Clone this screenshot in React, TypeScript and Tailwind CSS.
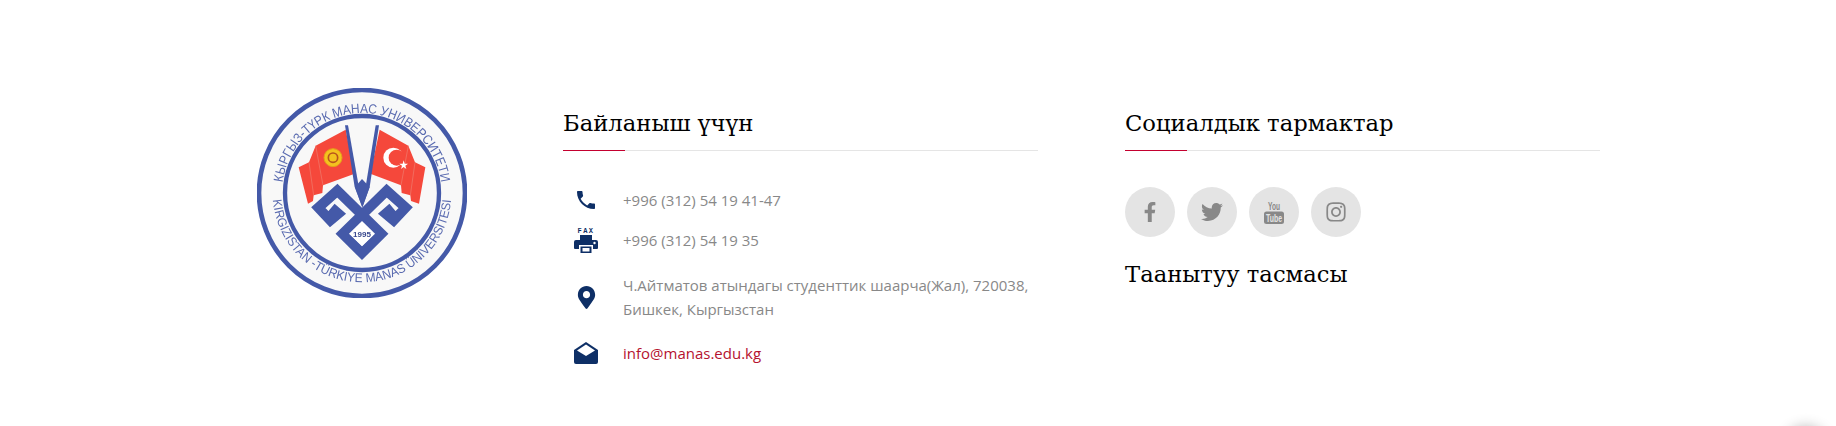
import React from "react";
import { FaFacebookF, FaInstagram, FaMapMarkerAlt, FaTwitter } from "react-icons/fa";
import { MdLocalPhone } from "react-icons/md";

const Logo: React.FC = () => {
  const blue = "#4459a8";
  const red = "#f5483b";
  return (
    <svg viewBox="52 53 630 630" className="w-[210px] h-[210px] blur-[0.5px]">
      <defs>
        <path id="logoTop" d="M 127 368 A 240 240 0 0 1 607 368" />
        <path id="logoBottom" d="M 99 368 A 268 268 0 0 0 635 368" />
      </defs>
      <circle cx="367" cy="368" r="309" fill="#f8f8f8" stroke={blue} strokeWidth="14" />
      <circle cx="367" cy="368" r="231" fill="#f8f8f8" stroke={blue} strokeWidth="13" />
      <text fill="#5a6bb0" fontSize="40" fontFamily="Liberation Sans, sans-serif">
        <textPath href="#logoTop" startOffset="50%" textAnchor="middle" textLength="690" lengthAdjust="spacingAndGlyphs">
          КЫРГЫЗ-ТҮРК МАНАС УНИВЕРСИТЕТИ
        </textPath>
      </text>
      <text fill="#5a6bb0" fontSize="38" fontFamily="Liberation Sans, sans-serif">
        <textPath href="#logoBottom" startOffset="50%" textAnchor="middle" textLength="800" lengthAdjust="spacingAndGlyphs">
          KIRGIZİSTAN -TÜRKİYE MANAS ÜNİVERSİTESİ
        </textPath>
      </text>

      {/* left flag */}
      <path d="M177 291 L208 276 L228 226 L318 178 L345 310 L250 345 L248 368 L222 375 L220 392 L205 400 Z" fill={red} />
      <path d="M208 276 L222 375 M228 226 L250 345" stroke="#ef7d70" strokeWidth="2" fill="none" />
      <circle cx="280" cy="262" r="27" fill="#f4c21f" stroke="#e3a21a" strokeWidth="3" />
      <circle cx="280" cy="262" r="14" fill="none" stroke="#b8541c" strokeWidth="5" />
      {/* right flag */}
      <path d="M557 291 L526 276 L506 226 L420 178 L392 310 L484 345 L486 368 L512 375 L514 392 L538 400 Z" fill={red} />
      <path d="M526 276 L512 375 M506 226 L484 345" stroke="#ef7d70" strokeWidth="2" fill="none" />
      <circle cx="461" cy="262" r="30" fill="#fff" />
      <circle cx="471" cy="262" r="24" fill={red} />
      <path d="M492 270 L495 280 L505 280 L497 286 L500 296 L492 290 L484 296 L487 286 L479 280 L489 280 Z" fill="#fff" />

      {/* poles and knot */}
      <path d="M316 165 L325 165 L368 410 L345 350 Z" fill={blue} />
      <path d="M408 165 L418 165 L390 350 L368 410 Z" fill={blue} />
      <path d="M346 350 L367 326 L390 350 L368 412 Z" fill={blue} />
      <path
        d="M275 412 L296 430 L272 450 L236 412 L293 361 L425 490 L367 548 L309 490 L441 361 L498 412 L462 450 L438 430 L459 412"
        fill="none"
        stroke={blue}
        strokeWidth="30"
        strokeLinejoin="miter"
      />
      <path d="M367 452 L406 490 L367 528 L328 490 Z" fill="#fff" />
      <text x="367" y="499" textAnchor="middle" fill="#3a4a8f" fontSize="24" fontWeight="700" fontFamily="Liberation Sans, sans-serif">
        1995
      </text>
    </svg>
  );
};

const Heading: React.FC<{ children: React.ReactNode }> = ({ children }) => (
  <h3 className="relative pb-[13px] border-b border-[#e5e5e5] text-[22.700px] leading-[28px] text-black font-['DejaVu_Serif',serif]">
    {children}
    <span className="absolute left-0 -bottom-px h-px w-[62px] bg-[#c4002f]" />
  </h3>
);

const FaxIcon: React.FC = () => (
  <span className="flex flex-col items-center">
    <span className="text-[7px] leading-[8px] font-bold tracking-[1.5px] text-[#0e2f66] font-['Liberation_Mono',monospace]">FAX</span>
    <svg viewBox="0 0 24 18" className="w-6 h-[18px]" fill="#0e2f66">
      <path d="M6 0h12v5H6z" />
      <path d="M2 5h20a2 2 0 0 1 2 2v6a1 1 0 0 1-1 1h-4v-4H5v4H1a1 1 0 0 1-1-1V7a2 2 0 0 1 2-2z" />
      <path d="M6.500 11.500h11V18h-11z" />
      <path d="M8.500 13h7v3.500h-7z" fill="#fff" />
      <circle cx="20.500" cy="8" r="1.200" fill="#fff" />
    </svg>
  </span>
);

const MailIcon: React.FC = () => (
  <svg viewBox="0 0 24 22" className="w-6 h-[22px]">
    <path d="M12 0 L24 8 V20 a2 2 0 0 1 -2 2 H2 a2 2 0 0 1 -2 -2 V8 Z" fill="#0e2f66" />
    <path d="M12 2.500 L21 8.500 L12 14 L3 8.500 Z" fill="#fff" />
  </svg>
);

const YoutubeIcon: React.FC = () => (
  <svg viewBox="0 0 20 23" className="w-5 h-[23px] overflow-visible" fontFamily="Liberation Sans, sans-serif" fontWeight="700">
    <text x="10" y="9" textAnchor="middle" fontSize="10" fill="#888888" textLength="12" lengthAdjust="spacingAndGlyphs">You</text>
    <rect x="0" y="10.500" width="20" height="12.500" rx="2.500" fill="#888888" />
    <text x="10" y="20.500" textAnchor="middle" fontSize="11" fill="#e4e4e4" textLength="16" lengthAdjust="spacingAndGlyphs">Tube</text>
  </svg>
);

const contacts = [
  { icon: <MdLocalPhone size={30} />, text: "+996 (312) 54 19 41-47" },
  { icon: <FaxIcon />, text: "+996 (312) 54 19 35" },
];

const socials = [
  <FaFacebookF size={20} />,
  <FaTwitter size={22} />,
  <YoutubeIcon />,
  <FaInstagram size={22} />,
];

export default function App() {
  return (
    <div className="relative h-[426px] overflow-hidden bg-white font-['Open_Sans',sans-serif]">
      <div className="grid grid-cols-[219px_475px_475px] gap-x-[87px] pl-[257px] pt-[88px]">
        <div>
          <Logo />
        </div>

        <div className="pt-[21px]">
          <Heading>Байланыш үчүн</Heading>
          <ul className="mt-[29px] text-[15px] text-[#888888]">
            {contacts.map((c) => (
              <li key={c.text} className="flex items-center h-[40px]">
                <span className="w-[60px] pl-[11px] pr-[25px] flex justify-center text-[#0e2f66] shrink-0">{c.icon}</span>
                {c.text}
              </li>
            ))}
            <li className="flex items-center mt-[14px] leading-[23.500px]">
              <span className="w-[60px] pl-[11px] pr-[25px] flex justify-center text-[#0e2f66] shrink-0">
                <FaMapMarkerAlt size={23} />
              </span>
              <span>
                Ч.Айтматов атындагы студенттик шаарча(Жал), 720038,
                <br />
                Бишкек, Кыргызстан
              </span>
            </li>
            <li className="flex items-center mt-[19px] h-[26px]">
              <span className="w-[60px] pl-[11px] pr-[25px] flex justify-center text-[#0e2f66] shrink-0">
                <MailIcon />
              </span>
              <a className="text-[#b5122f]">info@manas.edu.kg</a>
            </li>
          </ul>
        </div>

        <div className="pt-[21px]">
          <Heading>Социалдык тармактар</Heading>
          <div className="mt-[36px] flex gap-3">
            {socials.map((icon, i) => (
              <span key={i} className="w-[50px] h-[50px] rounded-full bg-[#e4e4e4] text-[#888888] flex items-center justify-center">
                {icon}
              </span>
            ))}
          </div>
          <h3 className="mt-[22px] text-[22.700px] leading-[30px] text-black font-['DejaVu_Serif',serif]">Таанытуу тасмасы</h3>
        </div>
      </div>

      <span className="absolute left-[1786px] top-[427px] w-10 h-10 rounded-full shadow-[0_0_14px_rgba(0,0,0,0.3)]" />
    </div>
  );
}
